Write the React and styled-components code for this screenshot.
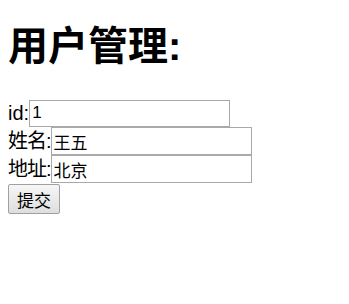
import React from "react";
import styled, { createGlobalStyle } from "styled-components";

const GlobalStyle = createGlobalStyle`
  body {
    margin: 8px;
    background: #fff;
    color: #000;
    font-family: "Liberation Sans", "Noto Sans CJK SC", sans-serif;
  }
`;

const Title = styled.h1`
  margin: 14px 0 29px;
  font-size: 40px;
  line-height: 48px;
  font-weight: bold;
`;

const Form = styled.form`
  display: flex;
  flex-direction: column;
  align-items: flex-start;
`;

const Row = styled.div`
  display: flex;
  align-items: center;
  height: 28px;
  font-size: 20px;
`;

const Label = styled.label`
  line-height: 28px;
  letter-spacing: ${(p) => (p.$cjk ? "-1px" : "0")};
`;

const TextInput = styled.input`
  box-sizing: border-box;
  width: 201px;
  height: ${(p) => (p.$short ? "27px" : "28px")};
  margin: 0;
  padding: 1px 2px;
  border: 1px solid #a9a9a9;
  border-radius: 0;
  background: #fff;
  font-family: "Liberation Sans", "Noto Sans CJK SC", sans-serif;
  font-size: 17px;
  color: #000;
  outline: none;
`;

const SubmitButton = styled.button`
  box-sizing: border-box;
  margin-top: 1px;
  height: 30px;
  padding: 0 8px;
  border: 1px solid #a0a0a0;
  border-radius: 2px;
  background: linear-gradient(#f6f6f6, #dedede);
  font-family: "Liberation Sans", "Noto Sans CJK SC", sans-serif;
  font-size: 17px;
  color: #000;
`;

const fields = [
  { label: "id:", value: "1", short: true },
  { label: "姓名:", value: "王五", cjk: true },
  { label: "地址:", value: "北京", cjk: true },
];

export default function App() {
  return (
    <>
      <GlobalStyle />
      <Title>用户管理:</Title>
      <Form onSubmit={(e) => e.preventDefault()}>
        {fields.map((f) => (
          <Row key={f.label}>
            <Label $cjk={f.cjk}>{f.label}</Label>
            <TextInput type="text" defaultValue={f.value} $short={f.short} />
          </Row>
        ))}
        <SubmitButton type="submit">提交</SubmitButton>
      </Form>
    </>
  );
}
